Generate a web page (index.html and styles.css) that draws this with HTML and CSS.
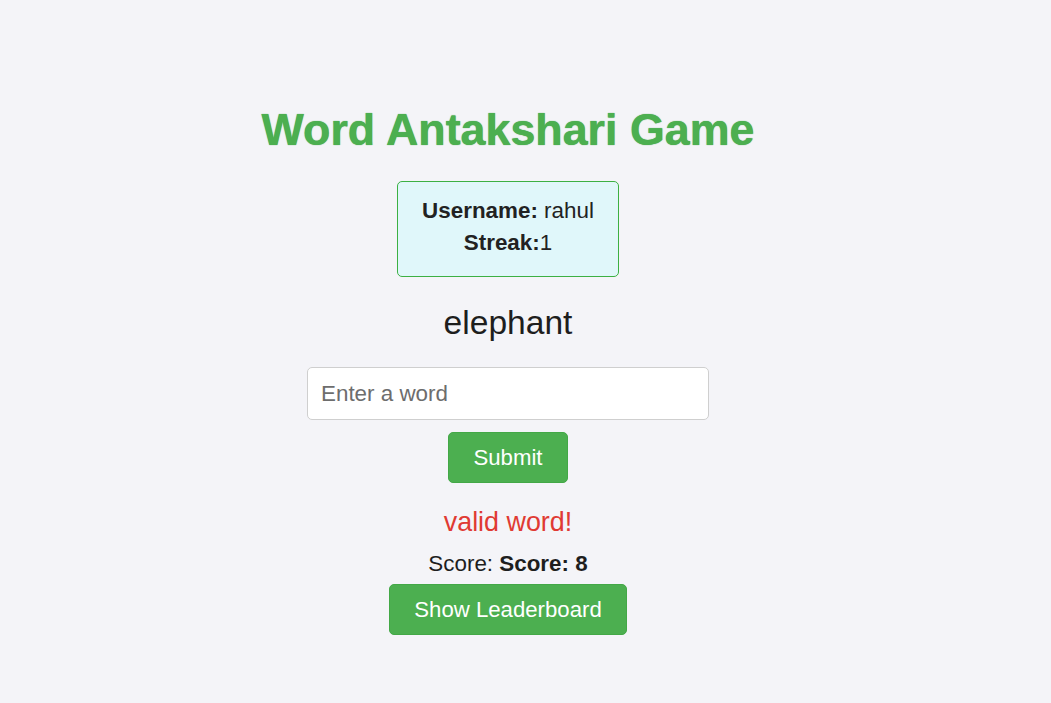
FILE: index.html
```html
<!DOCTYPE html>
<html lang="en">
<head>
<meta charset="utf-8">
<title>Word Antakshari Game</title>
<link rel="stylesheet" href="styles.css">
</head>
<body>
  <div class="container">
    <h1 class="title">Word Antakshari Game</h1>
    <div class="info-box">
      <div class="info-line"><b>Username:</b> rahul</div>
      <div class="info-line"><b>Streak:</b>1</div>
    </div>
    <div class="current-word">elephant</div>
    <input class="word-input" type="text" placeholder="Enter a word">
    <button class="btn btn-submit" type="button">Submit</button>
    <div class="message">valid word!</div>
    <div class="score">Score: <b>Score: 8</b></div>
    <button class="btn btn-leaderboard" type="button">Show Leaderboard</button>
  </div>
</body>
</html>
```

FILE: styles.css
```css
html, body {
  background: #f4f4f8;
}
body {
  margin: 8px;
  font-family: "Liberation Sans", Arial, sans-serif;
  font-size: 22.4px;
  color: #222;
}
.container {
  max-width: 1000px;
  padding-top: 95px;
  display: flex;
  flex-direction: column;
  align-items: center;
}
.title {
  margin: 0 0 26px;
  font-size: 44.8px;
  line-height: 52px;
  font-weight: bold;
  color: #4caf50;
  text-shadow: 0 0 1px #3a9a3e;
}
.info-box {
  background: #e0f7fa;
  border: 1px solid #3cb043;
  border-radius: 5px;
  padding: 13px 24px 17px;
  text-align: center;
}
.info-line {
  line-height: 32px;
}
.current-word {
  margin-top: 27px;
  font-size: 33.6px;
  line-height: 38px;
  color: #1e1e1e;
}
.word-input {
  margin-top: 25px;
  box-sizing: border-box;
  width: 402px;
  height: 53px;
  padding: 0 13px;
  border: 1px solid #cfcfcf;
  border-radius: 5px;
  background: #fff;
  font-family: "Liberation Sans", Arial, sans-serif;
  font-size: 22.4px;
  color: #222;
  outline: none;
}
.word-input::placeholder {
  color: #6d6d6d;
}
.btn {
  box-sizing: border-box;
  height: 51px;
  padding: 0 24px;
  border: 1px solid #43a847;
  border-radius: 5px;
  background: #4caf50;
  color: #fff;
  font-family: "Liberation Sans", Arial, sans-serif;
  font-size: 22.2px;
  cursor: pointer;
}
.btn-submit {
  margin-top: 12px;
}
.message {
  margin-top: 24px;
  font-size: 26.88px;
  line-height: 31px;
  color: #e03a33;
}
.score {
  margin-top: 13px;
  line-height: 26px;
  color: #1e1e1e;
}
.btn-leaderboard {
  margin-top: 7px;
}
```
